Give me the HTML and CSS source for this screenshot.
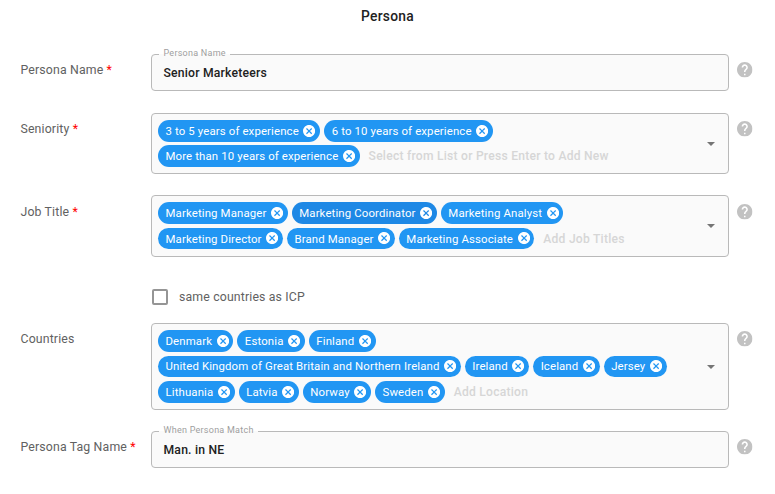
FILE: index.html
```html
<!DOCTYPE html>
<html lang="en">
<head>
<meta charset="utf-8">
<title>Persona</title>
<link rel="stylesheet" href="styles.css">
</head>
<body>
<svg class="sprite" aria-hidden="true">
  <symbol id="help" viewBox="2 2 20 20"><path d="M12 2C6.48 2 2 6.48 2 12s4.48 10 10 10 10-4.48 10-10S17.52 2 12 2zm1 17h-2v-2h2v2zm2.07-7.75l-.9.92C13.45 12.9 13 13.5 13 15h-2v-.5c0-1.1.45-2.1 1.17-2.83l1.24-1.26c.37-.36.59-.86.59-1.41 0-1.1-.9-2-2-2s-2 .9-2 2H8c0-2.21 1.79-4 4-4s4 1.79 4 4c0 .88-.36 1.68-.93 2.25z"/></symbol>
  <symbol id="cancel" viewBox="2 2 20 20"><path d="M12 2C6.47 2 2 6.47 2 12s4.47 10 10 10 10-4.47 10-10S17.53 2 12 2zm5 13.59L15.59 17 12 13.41 8.41 17 7 15.59 10.59 12 7 8.41 8.41 7 12 10.59 15.59 7 17 8.41 13.41 12 17 15.59z"/></symbol>
</svg>
<main class="form">
  <h1 class="title">Persona</h1>

  <div class="row row-name">
    <div class="label">Persona Name <span class="req">*</span></div>
    <fieldset class="field text-field"><legend>Persona Name</legend><div class="value">Senior Marketeers</div></fieldset>
    <svg class="help"><use href="#help"/></svg>
  </div>

  <div class="row row-seniority">
    <div class="label">Seniority <span class="req">*</span></div>
    <div class="field select">
      <div class="lines">
        <div class="line"><span class="chip">3 to 5 years of experience<svg><use href="#cancel"/></svg></span><span class="chip">6 to 10 years of experience<svg><use href="#cancel"/></svg></span></div>
        <div class="line"><span class="chip">More than 10 years of experience<svg><use href="#cancel"/></svg></span><span class="hint">Select from List or Press Enter to Add New</span></div>
      </div>
      <i class="arrow"></i>
    </div>
    <svg class="help"><use href="#help"/></svg>
  </div>

  <div class="row row-job">
    <div class="label">Job Title <span class="req">*</span></div>
    <div class="field select">
      <div class="lines">
        <div class="line"><span class="chip">Marketing Manager<svg><use href="#cancel"/></svg></span><span class="chip active">Marketing Coordinator<svg><use href="#cancel"/></svg></span><span class="chip">Marketing Analyst<svg><use href="#cancel"/></svg></span></div>
        <div class="line"><span class="chip">Marketing Director<svg><use href="#cancel"/></svg></span><span class="chip">Brand Manager<svg><use href="#cancel"/></svg></span><span class="chip">Marketing Associate<svg><use href="#cancel"/></svg></span><span class="hint">Add Job Titles</span></div>
      </div>
      <i class="arrow"></i>
    </div>
    <svg class="help"><use href="#help"/></svg>
  </div>

  <div class="check"><span class="box"></span>same countries as ICP</div>

  <div class="row row-countries">
    <div class="label">Countries</div>
    <div class="field select">
      <div class="lines">
        <div class="line"><span class="chip">Denmark<svg><use href="#cancel"/></svg></span><span class="chip">Estonia<svg><use href="#cancel"/></svg></span><span class="chip">Finland<svg><use href="#cancel"/></svg></span></div>
        <div class="line"><span class="chip">United Kingdom of Great Britain and Northern Ireland<svg><use href="#cancel"/></svg></span><span class="chip">Ireland<svg><use href="#cancel"/></svg></span><span class="chip">Iceland<svg><use href="#cancel"/></svg></span><span class="chip">Jersey<svg><use href="#cancel"/></svg></span></div>
        <div class="line"><span class="chip">Lithuania<svg><use href="#cancel"/></svg></span><span class="chip">Latvia<svg><use href="#cancel"/></svg></span><span class="chip">Norway<svg><use href="#cancel"/></svg></span><span class="chip">Sweden<svg><use href="#cancel"/></svg></span><span class="hint">Add Location</span></div>
      </div>
      <i class="arrow"></i>
    </div>
    <svg class="help"><use href="#help"/></svg>
  </div>

  <div class="row row-tag">
    <div class="label">Persona Tag Name <span class="req">*</span></div>
    <fieldset class="field text-field"><legend>When Persona Match</legend><div class="value">Man. in NE</div></fieldset>
    <svg class="help"><use href="#help"/></svg>
  </div>
</main>
</body>
</html>
```
FILE: styles.css
```css
* { box-sizing: border-box; }
body { margin: 0; background: #fff; font-family: Roboto, "Liberation Sans", sans-serif; color: #212121; }
.sprite { display: none; }
.form { width: 775px; height: 494px; overflow: hidden; }
.title { margin: 0; padding-top: 6px; height: 54px; font-size: 13.8px; line-height: 20px; font-weight: 500; letter-spacing: .3px; text-align: center; }
.row { display: grid; grid-template-columns: 130.5px 578px 24px; column-gap: 0; padding-left: 20.5px; align-items: start; }
.row-name { height: 59px; }
.row-seniority { height: 82px; }
.row-job { height: 94px; }
.row-countries { height: 108px; }
.label { padding-top: 6px; font-size: 12.3px; line-height: 20px; letter-spacing: .15px; color: #616161; white-space: nowrap; }
.row-job .label { padding-top: 7px; }
.req { color: #f00; }
.field { margin: 0; padding: 0; border: 1px solid #b9b9b9; border-radius: 4px; background: #fafafa; min-width: 0; }
.text-field { height: 43px; margin-top: -6px; padding-left: 7px; }
.text-field legend { padding: 0 4.5px; height: 12px; font-size: 9px; line-height: 11px; letter-spacing: .25px; color: #9e9e9e; white-space: nowrap; }
.value { padding: 3px 0 0 4.5px; font-size: 12.2px; line-height: 20px; font-weight: 500; letter-spacing: .2px; }
.select { display: flex; align-items: center; justify-content: space-between; padding: 0 13px 0 6px; }
.row-seniority .field { height: 61px; }
.row-job .field { height: 62px; }
.row-countries .field { height: 87px; }
.lines { display: grid; row-gap: 3.5px; }
.row-seniority .lines { row-gap: 3px; }
.row-seniority .chip { height: 22px; }
.line { display: flex; gap: 4px; }
.chip { display: flex; align-items: center; gap: 4.5px; height: 21.8px; padding: 0 4.6px 0 7.5px; border-radius: 11px; background: #2196f3; color: #fff; font-size: 11.4px; letter-spacing: .135px; white-space: nowrap; }
.chip svg { width: 12.2px; height: 12.2px; fill: #fff; }
.active { background: #1e88e5; }
.hint { padding-left: 5px; font-size: 12.1px; line-height: 22px; font-weight: 500; letter-spacing: .24px; color: #d6d6d6; white-space: nowrap; }
.arrow { border: 4.5px solid transparent; border-top-color: #757575; border-bottom: 0; }
.help { width: 15.5px; height: 15.5px; margin: 8px 0 0 8.3px; fill: #c2c2c2; }
.row-job .help { margin-top: 9px; }
.check { display: flex; align-items: center; gap: 11px; height: 16px; margin-bottom: 18px; padding-left: 152px; font-size: 12.3px; letter-spacing: .15px; color: #616161; }
.box { width: 16px; height: 16px; border: 2px solid #959595; border-radius: 2px; }
```
